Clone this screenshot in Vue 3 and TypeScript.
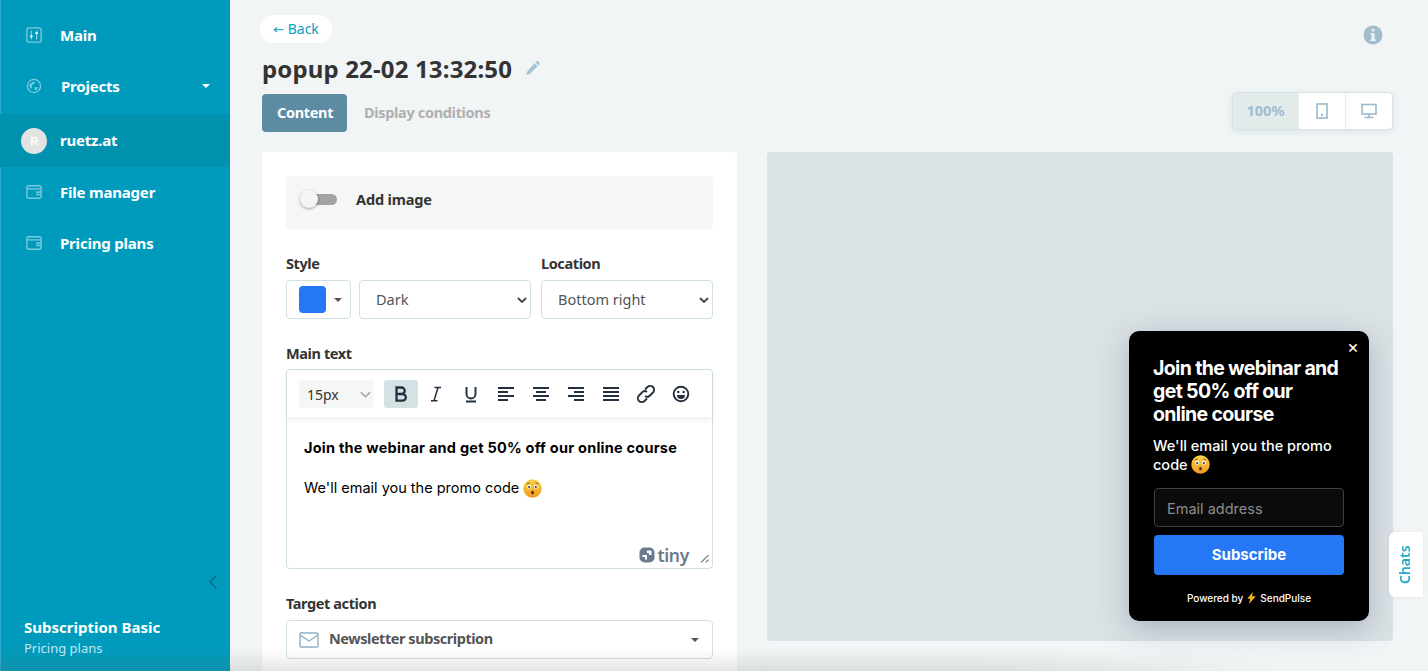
<template>
  <div class="page">
    <aside class="side">
      <nav class="nav">
        <a class="nav-item">
          <svg class="nav-icon" viewBox="0 0 18 18"><rect x="1" y="1" width="16" height="16" rx="2.500" /><path d="M6 4v10M12 4v10" /><path class="fat" d="M4.600 10.500h2.800M10.600 7h2.800" /></svg>
          <span>Main</span>
        </a>
        <a class="nav-item projects">
          <svg class="nav-icon" viewBox="0 0 18 18"><circle cx="9" cy="9" r="7.400" /><path class="solid" d="M3.500 7.500c2-.8 3-2.500 5-3.500l1.500.8-1 2-2.500 1 .5 3.500-2 .5zM10 10l3.500.5-1.500 3-2 .5z" /></svg>
          <span>Projects</span>
          <i class="caret white"></i>
        </a>
        <a class="nav-item site">
          <span class="avatar">R</span>
          <span class="site-name">ruetz.at</span>
        </a>
        <a v-for="item in walletItems" :key="item" class="nav-item wallet">
          <svg class="nav-icon" viewBox="0 0 18 18"><rect x="1" y="2" width="16" height="14" rx="2" /><path d="M1 5.500h16M17 9h-4.500v3H17" /></svg>
          <span>{{ item }}</span>
        </a>
      </nav>
      <svg class="collapse" viewBox="0 0 10 16"><path d="M8.500 1.500 2 8l6.500 6.500" /></svg>
      <div class="plan">
        <b>Subscription Basic</b>
        <span>Pricing plans</span>
      </div>
    </aside>

    <main class="main">
      <div class="head">
        <div>
          <a class="back"><span class="arrow">←</span> Back</a>
          <h1>popup 22-02 13:32:50
            <svg class="pencil" viewBox="0 0 16 16"><path d="M11.700 1.300a1 1 0 0 1 1.400 0l1.600 1.600a1 1 0 0 1 0 1.400l-1.200 1.200-3-3zM9.700 3.300l3 3-7.500 7.500-3 .9-.9.300.3-.9.900-3z" /></svg>
          </h1>
          <div class="tabs">
            <a class="tab active">Content</a>
            <a class="tab">Display conditions</a>
          </div>
        </div>
        <div class="head-right">
          <svg class="info" viewBox="0 0 20 20"><circle cx="10" cy="10" r="9.500" /><rect class="w" x="8.700" y="3.800" width="2.800" height="2.600" rx="1" /><path class="w" d="M7.500 8.200h4v6h1.200v1.800H7.300v-1.800h1.300V10H7.500z" /></svg>
          <div class="views">
            <span class="zoom">100%</span>
            <span class="view">
              <svg width="12" height="16" viewBox="0 0 12 16"><rect x="1" y="1" width="10" height="14" /><rect class="dot" x="5" y="11" width="2" height="2" /></svg>
            </span>
            <span class="view">
              <svg width="16" height="16" viewBox="0 0 16 16"><rect x="1" y="1.500" width="14" height="9.500" /><path d="M8 11v3M3.500 14.500h9" /></svg>
            </span>
          </div>
        </div>
      </div>

      <div class="columns">
        <section class="card">
          <div class="add-image">
            <span class="toggle"><i></i></span>
            <b>Add image</b>
          </div>

          <div class="style-row">
            <div class="style-col">
              <label>Style</label>
              <div class="style-controls">
                <div class="field swatch"><span class="color"></span><i class="caret"></i></div>
                <div class="field select">
                  <span>Dark</span>
                  <svg class="chev" viewBox="0 0 10 6"><path d="m1 1 4 4 4-4" /></svg>
                </div>
              </div>
            </div>
            <div class="loc-col">
              <label>Location</label>
              <div class="field select">
                <span>Bottom right</span>
                <svg class="chev" viewBox="0 0 10 6"><path d="m1 1 4 4 4-4" /></svg>
              </div>
            </div>
          </div>

          <label class="main-label">Main text</label>
          <div class="editor">
            <div class="toolbar">
              <div class="size">
                <span>15px</span>
                <svg viewBox="0 0 12 7"><path d="m1 1 5 5 5-5" /></svg>
              </div>
              <button class="tool on">
                <svg viewBox="0 0 24 24"><path class="stroke thick" d="M7.500 5.500h5a3.200 3.200 0 0 1 0 6.500h-5zm0 6.500h6a3.300 3.300 0 0 1 0 6.700h-6z" /></svg>
              </button>
              <button class="tool">
                <svg viewBox="0 0 24 24"><path class="stroke thin" d="M10.500 5.500H17M7 18.800h6.500M14 5.500l-4 13.300" /></svg>
              </button>
              <button class="tool">
                <svg viewBox="0 0 24 24"><path class="stroke" d="M7.500 5v7a4.500 4.500 0 0 0 9 0V5M7 19.500h10" /></svg>
              </button>
              <button v-for="(lines, i) in alignIcons" :key="i" class="tool">
                <svg viewBox="0 0 24 24"><path class="stroke" :d="lines" /></svg>
              </button>
              <button class="tool">
                <svg viewBox="0 0 24 24"><path class="stroke" d="m11 7.500 2.500-2.500a3.700 3.700 0 0 1 5.500 5.500L16 13.500a3.700 3.700 0 0 1-5 .5M13 16.500 10.500 19A3.700 3.700 0 0 1 5 13.500L8 10.500a3.700 3.700 0 0 1 5-.5" /></svg>
              </button>
              <button class="tool">
                <svg viewBox="0 0 24 24"><circle class="stroke" cx="12" cy="12" r="7.300" /><circle class="ink" cx="9.300" cy="10" r="1.200" /><circle class="ink" cx="14.700" cy="10" r="1.200" /><path class="ink" d="M8 13h8a4 4 0 0 1-8 0z" /></svg>
              </button>
            </div>
            <div class="body">
              <p class="strong">Join the webinar and get 50% off our online course</p>
              <p class="emoji-line">We'll email you the promo code
                <svg class="emoji" viewBox="0 0 20 20"><defs><linearGradient id="face1" x1="0" y1="0" x2="0" y2="1"><stop offset="0" stop-color="#fbd34e" /><stop offset="1" stop-color="#f09a1c" /></linearGradient></defs><circle cx="10" cy="10" r="9.700" fill="url(#face1)" /><path d="M4 5.200 7 4M16 5.200 13 4" stroke="#7a4a14" stroke-width=".9" fill="none" /><circle cx="6.500" cy="8.200" r="2.100" fill="#fff" /><circle cx="13.500" cy="8.200" r="2.100" fill="#fff" /><circle cx="6.500" cy="8.400" r="1.100" fill="#3b2a1c" /><circle cx="13.500" cy="8.400" r="1.100" fill="#3b2a1c" /><ellipse cx="10" cy="14.300" rx="1.500" ry="2" fill="#5a3418" /></svg>
              </p>
            </div>
            <div class="brand">
              <svg viewBox="0 0 16 16"><rect x="0.500" y="0.500" width="15" height="15" rx="5" fill="#6b7a8c" /><path fill="#fff" d="M8 3.500h4.500V8H10V6H8zM3.500 8H8v4.500H6V10H3.500z" /></svg>
              <span>tiny</span>
              <svg class="grip" viewBox="0 0 8 8"><path d="M7.500 1 1 7.500M7.500 5 5 7.500" /></svg>
            </div>
          </div>

          <label class="target-label">Target action</label>
          <div class="field action">
            <svg class="mail" viewBox="0 0 20 16"><rect x="1" y="1" width="18" height="14" rx="1" /><path d="m1 3 9 6 9-6" /></svg>
            <b>Newsletter subscription</b>
            <i class="caret"></i>
          </div>
        </section>

        <section class="preview">
          <div class="popup">
            <span class="close">×</span>
            <h2>Join the webinar and get 50% off our online course</h2>
            <p>We'll email you the promo code
              <svg class="emoji" viewBox="0 0 20 20"><defs><linearGradient id="face2" x1="0" y1="0" x2="0" y2="1"><stop offset="0" stop-color="#fbd34e" /><stop offset="1" stop-color="#f09a1c" /></linearGradient></defs><circle cx="10" cy="10" r="9.700" fill="url(#face2)" /><path d="M4 5.200 7 4M16 5.200 13 4" stroke="#7a4a14" stroke-width=".9" fill="none" /><circle cx="6.500" cy="8.200" r="2.100" fill="#fff" /><circle cx="13.500" cy="8.200" r="2.100" fill="#fff" /><circle cx="6.500" cy="8.400" r="1.100" fill="#3b2a1c" /><circle cx="13.500" cy="8.400" r="1.100" fill="#3b2a1c" /><ellipse cx="10" cy="14.300" rx="1.500" ry="2" fill="#5a3418" /></svg>
            </p>
            <div class="email">Email address</div>
            <div class="subscribe">Subscribe</div>
            <div class="powered">
              Powered by
              <svg viewBox="0 0 10 14"><path fill="#f5b21f" d="M6.500 0 0 8h3.500L2 14l8-9H5.800z" /></svg>
              SendPulse
            </div>
          </div>
        </section>
      </div>
    </main>

    <div class="chats">Chats</div>
    <div class="fade"></div>
  </div>
</template>

<script setup lang="ts">
const walletItems = ['File manager', 'Pricing plans']

const alignIcons = [
  'M4 6h16M4 10h10M4 14h16M4 18h10',
  'M4 6h16M7 10h10M4 14h16M7 18h10',
  'M4 6h16M10 10h10M4 14h16M10 18h10',
  'M4 6h16M4 10h16M4 14h16M4 18h16',
]
</script>

<style>
html, body {
  margin: 0;
  height: 100%;
  overflow: hidden;
  background: #f1f5f6;
}
</style>

<style scoped>
.page {
  display: flex;
  height: 671px;
  overflow: hidden;
  position: relative;
  font-family: "Noto Sans", "Open Sans", sans-serif;
  color: #333;
  background: #f1f5f6;
}

/* sidebar */
.side {
  width: 230px;
  flex: none;
  background: #009bbc;
  box-shadow: inset 1px 0 #2aaecb;
  color: #fff;
  display: flex;
  flex-direction: column;
  position: relative;
}
.nav {
  padding-top: 9px;
}
.nav-item {
  display: flex;
  align-items: center;
  height: 51px;
  padding-left: 26px;
  font-size: 15px;
  font-weight: 700;
  letter-spacing: -0.2px;
}
.nav-item.site {
  height: 53px;
  margin-top: 3px;
  background: #0091af;
  padding-left: 21px;
}
.site-name {
  margin-top: -2px;
}
.nav-item.wallet {
  height: 50px;
  margin-bottom: 1px;
}
.nav-item.projects {
  padding-right: 20px;
}
.nav-item.projects span {
  flex: 1;
  margin-left: 1px;
}
.nav-icon {
  width: 16px;
  height: 16px;
  margin-right: 18px;
  fill: none;
  stroke: #7cc9dd;
  stroke-width: 1.500;
}
.nav-icon .fat {
  stroke: #fff;
  stroke-width: 2;
}
.nav-icon .solid {
  fill: #7cc9dd;
  stroke: none;
}
.avatar {
  width: 26px;
  height: 26px;
  margin-right: 13px;
  border-radius: 50%;
  background: #e3e3e3;
  display: flex;
  align-items: center;
  justify-content: center;
  font-size: 11px;
  font-family: "Liberation Sans", sans-serif;
}
.caret {
  display: inline-block;
  width: 0;
  height: 0;
  border-left: 4px solid transparent;
  border-right: 4px solid transparent;
  border-top: 4px solid #555;
}
.caret.white {
  border-top-color: #fff;
}
.collapse {
  position: absolute;
  left: 208px;
  top: 574px;
  width: 10px;
  height: 16px;
  fill: none;
  stroke: #0a6d8a;
  stroke-width: 1.600;
}
.plan {
  margin-top: auto;
  padding: 0 0 14px 24px;
  display: flex;
  flex-direction: column;
  gap: 2px;
}
.plan b {
  font-size: 15px;
  letter-spacing: 0;
}
.plan span {
  font-size: 13px;
  color: #c4e8f1;
  letter-spacing: 0;
}

/* header */
.main {
  flex: 1;
  padding: 15px 35px 0 32px;
  min-width: 0;
}
.head {
  display: flex;
  justify-content: space-between;
  height: 137px;
}
.back {
  display: inline-block;
  margin-left: -2px;
  width: 72px;
  height: 28px;
  line-height: 27px;
  box-sizing: border-box;
  text-align: center;
  background: #fff;
  border-radius: 14px;
  font-size: 14px;
  color: #0aa0bf;
}
.arrow {
  font-family: "DejaVu Sans", sans-serif;
  font-size: 13px;
}
h1 {
  margin: 9px 0 9px;
  height: 33px;
  line-height: 33px;
  font-size: 24px;
  font-weight: 700;
  letter-spacing: 0.15px;
  color: #333;
  display: flex;
  align-items: center;
  gap: 13px;
}
.pencil {
  width: 16px;
  height: 16px;
  margin-top: -2px;
  fill: #a5c3d6;
}
.tabs {
  display: flex;
  align-items: center;
}
.tab {
  font-size: 14.500px;
  font-weight: 700;
  letter-spacing: -0.33px;
  color: #b0b0b0;
  padding: 0 17px;
  height: 38px;
  line-height: 36px;
  border-radius: 4px;
}
.tab.active {
  background: #5d8ba3;
  color: #fff;
  padding: 0 15px;
  width: 85px;
  box-sizing: border-box;
  white-space: nowrap;
}
.head-right {
  display: flex;
  flex-direction: column;
  align-items: flex-end;
}
.info {
  width: 20px;
  height: 20px;
  margin: 10px 10px 0 0;
  fill: #a0bccd;
}
.info .w {
  fill: #f1f5f6;
}
.views {
  display: flex;
  margin-top: 47px;
  height: 38px;
  box-sizing: border-box;
  border: 1px solid #d6e3e5;
  border-radius: 4px;
  box-shadow: 0 2px 6px rgba(90, 130, 150, 0.14);
  background: #fff;
  overflow: hidden;
}
.zoom {
  width: 65px;
  background: #e2eaea;
  color: #a0bccd;
  font-size: 14.500px;
  font-weight: 700;
  text-align: center;
  line-height: 34px;
}
.view {
  width: 47px;
  box-sizing: border-box;
  display: flex;
  align-items: center;
  justify-content: center;
  border-left: 1px solid #e6eeef;
}
.view svg {
  fill: none;
  stroke: #9ab8c9;
  stroke-width: 1.600;
}
.view svg .dot {
  fill: #9ab8c9;
  stroke: none;
}

/* columns */
.columns {
  display: grid;
  grid-template-columns: 475px 626px;
  gap: 30px;
}
.card {
  background: #fff;
  border-radius: 4px;
  padding: 24px;
  height: 560px;
  box-sizing: border-box;
}
.add-image {
  background: #f5f7f7;
  height: 53px;
  box-sizing: border-box;
  padding: 0 0 6px 15px;
  border-radius: 4px;
  display: flex;
  align-items: center;
  gap: 19px;
}
.add-image b {
  font-size: 14.500px;
  letter-spacing: -0.15px;
  margin-top: -2px;
}
.toggle {
  width: 36px;
  height: 11px;
  background: #a3a3a3;
  border-radius: 6px;
  position: relative;
}
.toggle i {
  position: absolute;
  left: -1px;
  top: -4px;
  width: 18px;
  height: 18px;
  border-radius: 50%;
  background: #f5f5f5;
  box-shadow: 0 1px 3px rgba(0, 0, 0, 0.35);
}
label {
  display: block;
  font-size: 14.500px;
  font-weight: 700;
  letter-spacing: -0.4px;
  color: #333;
}
.style-row {
  display: flex;
  gap: 10px;
  margin-top: 24px;
}
.style-col {
  width: 245px;
}
.loc-col {
  width: 172px;
}
.style-col label, .loc-col label {
  margin-bottom: 7px;
  line-height: 20px;
}
.style-controls {
  display: flex;
  gap: 8px;
}
.field {
  height: 39px;
  box-sizing: border-box;
  border: 1px solid #cfe0e3;
  border-radius: 4px;
  background: #fff;
  display: flex;
  align-items: center;
}
.swatch {
  width: 65px;
  flex: none;
  padding-left: 12px;
  gap: 8px;
}
.color {
  width: 27px;
  height: 27px;
  border-radius: 4px;
  background: #2577f5;
}
.select {
  flex: 1;
  justify-content: space-between;
  padding: 0 3px 0 16px;
  font-size: 14.500px;
  color: #555;
}
.select span {
  margin-top: -2px;
}
.chev {
  width: 10px;
  height: 6px;
  fill: none;
  stroke: #444;
  stroke-width: 1.800;
}
.main-label {
  margin-top: 24px;
  line-height: 20px;
}
.editor {
  margin-top: 6px;
  height: 200px;
  box-sizing: border-box;
  border: 1px solid #cfe0e3;
  border-radius: 4px;
  position: relative;
}
.toolbar {
  height: 47px;
  display: flex;
  align-items: center;
  padding: 1px 0 0 12px;
  box-shadow: 0 3px 6px rgba(0, 0, 0, 0.07);
  box-sizing: border-box;
}
.size {
  width: 75px;
  height: 28px;
  background: #f5f6f6;
  border-radius: 3px;
  display: flex;
  align-items: center;
  justify-content: space-between;
  padding: 0 3px 0 8px;
  box-sizing: border-box;
  font-size: 14px;
  color: #333;
  margin-right: 10px;
}
.size svg {
  width: 11px;
  height: 7px;
  fill: none;
  stroke: #9a9fa6;
  stroke-width: 1.500;
}
.tool {
  width: 34px;
  height: 28px;
  padding: 0;
  margin-right: 1px;
  border: 0;
  background: none;
  border-radius: 3px;
  display: flex;
  align-items: center;
  justify-content: center;
}
.tool.on {
  background: #d3e3e4;
}
.tool svg {
  width: 24px;
  height: 24px;
}
.stroke {
  fill: none;
  stroke: #22303f;
  stroke-width: 1.900;
}
.stroke.thick {
  stroke-width: 2.300;
}
.stroke.thin {
  stroke-width: 1.500;
}
.ink {
  fill: #22303f;
}
.body {
  padding: 21px 17px 0;
  font-family: Inter, "Liberation Sans", sans-serif;
  font-size: 14.500px;
  color: #000;
  line-height: 20px;
}
.body p {
  margin: 0;
  display: flex;
  align-items: center;
  gap: 4px;
}
.body .strong {
  font-weight: 700;
  letter-spacing: 0.24px;
  height: 20px;
  margin-bottom: 20px;
}
.emoji {
  width: 19px;
  height: 19px;
  flex: none;
}
.brand {
  position: absolute;
  right: 3px;
  bottom: 3px;
  display: flex;
  align-items: center;
  gap: 2px;
  color: #6b7a8c;
  font-size: 17.500px;
  font-weight: 600;
  letter-spacing: -0.3px;
  line-height: 20px;
}
.brand > svg:first-child {
  width: 16px;
  height: 16px;
}
.grip {
  width: 9px;
  height: 9px;
  margin: 7px 0 0 9px;
  fill: none;
  stroke: #666;
  stroke-width: 0.900;
}
.target-label {
  margin-top: 24px;
  line-height: 20px;
}
.action {
  margin-top: 7px;
  padding: 0 13px 0 12px;
}
.mail {
  width: 20px;
  height: 16px;
  flex: none;
  fill: none;
  stroke: #8eb0c4;
  stroke-width: 1.400;
  margin-right: 10px;
}
.action b {
  flex: 1;
  font-size: 14.500px;
  letter-spacing: -0.45px;
  color: #555;
  margin-top: -4px;
}

/* preview */
.preview {
  background: #dbe2e5;
  border-radius: 4px;
  height: 489px;
  display: flex;
  justify-content: flex-end;
  align-items: flex-end;
  padding: 0 24px 20px 0;
  box-sizing: border-box;
}
.popup {
  width: 240px;
  height: 290px;
  box-sizing: border-box;
  background: #000;
  color: #fff;
  border-radius: 10px;
  padding: 26px 24px 0;
  position: relative;
  font-family: Inter, "Liberation Sans", sans-serif;
  box-shadow: 0 8px 30px rgba(60, 70, 110, 0.3);
}
.close {
  position: absolute;
  right: 10px;
  top: 6px;
  font-size: 18px;
  line-height: 20px;
}
.popup h2 {
  margin: 0;
  font-size: 19.500px;
  line-height: 23px;
  font-weight: 700;
  letter-spacing: -0.65px;
}
.popup p {
  margin: 11px 0 0;
  font-size: 14.500px;
  line-height: 18px;
  font-weight: 500;
}
.popup .emoji {
  vertical-align: -4px;
}
.email {
  margin: 14px 1px 0;
  height: 39px;
  box-sizing: border-box;
  border: 1px solid #3f3f3f;
  border-radius: 4px;
  background: #0b0b0b;
  color: #8b8b8b;
  font-size: 14.500px;
  line-height: 39px;
  padding-left: 12px;
}
.subscribe {
  margin: 8px 1px 0;
  height: 40px;
  background: #2577f5;
  border-radius: 4px;
  text-align: center;
  line-height: 39px;
  font-size: 15px;
  font-weight: 700;
}
.powered {
  margin-top: 17px;
  display: flex;
  justify-content: center;
  align-items: center;
  gap: 4px;
  font-size: 10px;
  font-weight: 500;
}
.powered svg {
  width: 9px;
  height: 12px;
}

/* overlays */
.chats {
  position: absolute;
  left: 1389px;
  top: 532px;
  width: 34px;
  height: 65px;
  background: #fff;
  color: #26a8c4;
  font-size: 14px;
  font-weight: 600;
  writing-mode: vertical-rl;
  transform: rotate(180deg);
  border-radius: 0 6px 6px 0;
  text-align: center;
  line-height: 32px;
  box-shadow: 0 0 4px rgba(0, 0, 0, 0.05);
}
.fade {
  position: absolute;
  left: 0;
  right: 130px;
  bottom: 0;
  height: 22px;
  background: linear-gradient(rgba(100, 100, 100, 0), rgba(100, 100, 100, 0.16));
  -webkit-mask-image: linear-gradient(to right, #000 75%, transparent);
  mask-image: linear-gradient(to right, #000 75%, transparent);
  pointer-events: none;
}
</style>
